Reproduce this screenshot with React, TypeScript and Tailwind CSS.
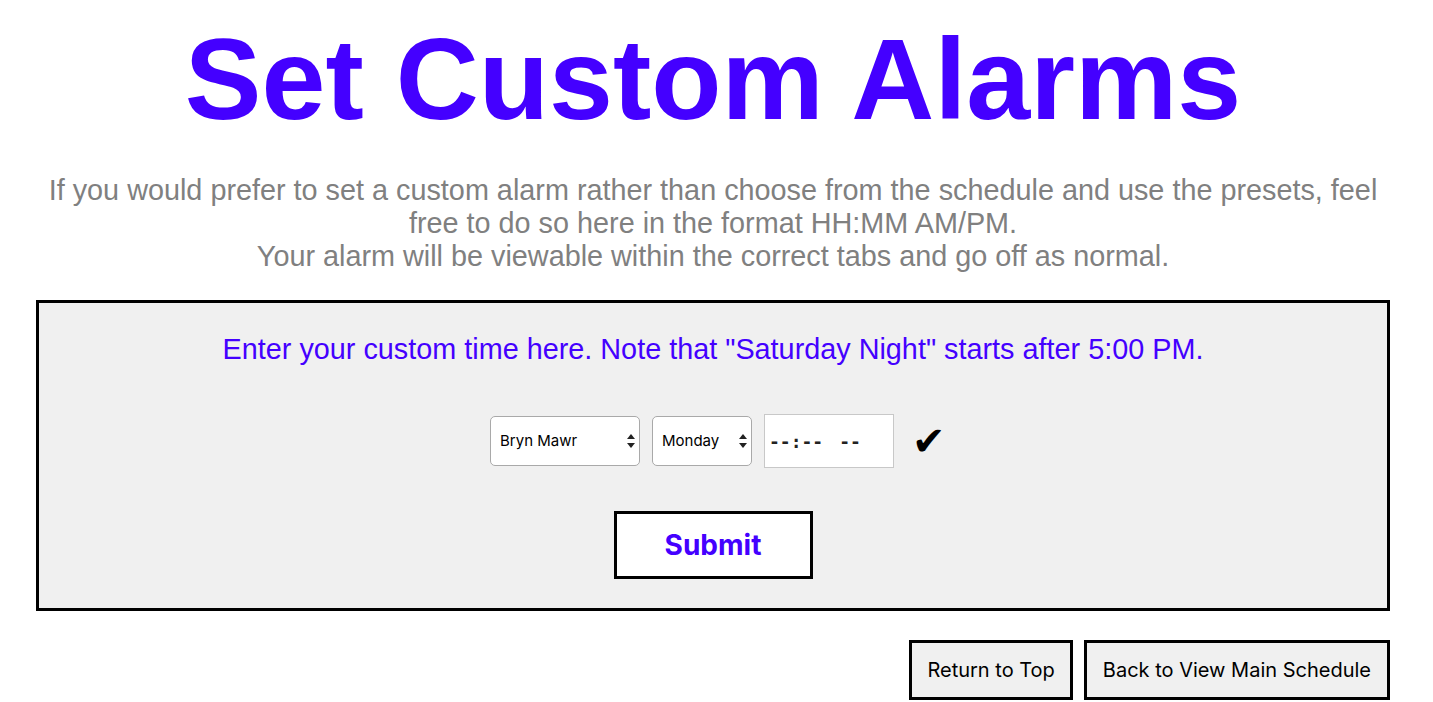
import React, { useState } from 'react';

const blue = 'text-[#4400ff]';

const CustomAlarms: React.FC = () => {
  const [college, setCollege] = useState('Bryn Mawr');
  const [day, setDay] = useState('Monday');

  return (
    <div className="min-h-screen bg-white pl-[36px] pr-[43px] font-['Liberation_Sans',Arial,sans-serif]">
      <h1 className={`pt-[14px] text-center text-[115px] font-bold leading-[130px] ${blue}`}>Set Custom Alarms</h1>

      <p className="mt-[30px] text-center text-[28.8px] leading-[33px] text-[#808080]">
        If you would prefer to set a custom alarm rather than choose from the schedule and use the presets, feel free to do so here in the format HH:MM AM/PM.
        <br />
        Your alarm will be viewable within the correct tabs and go off as normal.
      </p>

      <div className="mt-[27px] border-[3px] border-black bg-[#f0f0f0] pt-[29px] pb-[29px]">
        <p className={`text-center text-[28.8px] leading-[34px] ${blue}`}>
          Enter your custom time here. Note that "Saturday Night" starts after 5:00 PM.
        </p>

        <div className="mt-[48px] flex items-center justify-center gap-[12px] pl-[10px]">
          <div className="relative">
            <select
              value={college}
              onChange={(e) => setCollege(e.target.value)}
              className="h-[50px] w-[150px] appearance-none rounded-[5px] border border-[#a9a9a9] bg-white pl-[9px] text-[15px] text-black font-['Inter',sans-serif]"
            >
              <option>Bryn Mawr</option>
              <option>Haverford</option>
            </select>
            <Arrows />
          </div>
          <div className="relative">
            <select
              value={day}
              onChange={(e) => setDay(e.target.value)}
              className="h-[50px] w-[100px] appearance-none rounded-[5px] border border-[#a9a9a9] bg-white pl-[9px] text-[15px] text-black font-['Inter',sans-serif]"
            >
              <option>Monday</option>
              <option>Tuesday</option>
              <option>Wednesday</option>
              <option>Thursday</option>
              <option>Friday</option>
              <option>Saturday</option>
              <option>Sunday</option>
            </select>
            <Arrows />
          </div>
          <div className="flex h-[54px] w-[130px] items-center border border-[#c8c8c8] bg-white pl-[4px] font-['DejaVu_Sans_Mono',monospace] text-[18px] font-bold text-[#222]">
            <span>--:--</span>
            <span className="ml-[16px]">--</span>
          </div>
          <span className="ml-[6px] text-[40px] leading-none text-black">✔</span>
        </div>

        <div className="mt-[43px] flex justify-center">
          <button className={`h-[68px] w-[199px] border-[3px] border-black bg-white font-['Inter',sans-serif] text-[28px] font-bold ${blue}`}>
            Submit
          </button>
        </div>
      </div>

      <div className="mt-[29px] flex justify-end gap-[11px]">
        <button className="h-[60px] border-[3px] border-black bg-[#f0f0f0] px-[15px] font-['Inter',sans-serif] text-[20px] text-black">
          Return to Top
        </button>
        <button className="h-[60px] border-[3px] border-black bg-[#f0f0f0] px-[16px] font-['Inter',sans-serif] text-[20px] text-black">
          Back to View Main Schedule
        </button>
      </div>
    </div>
  );
};

const Arrows: React.FC = () => (
  <svg className="pointer-events-none absolute right-[5px] top-1/2 -translate-y-1/2" width="8" height="14" viewBox="0 0 8 14">
    <path d="M4 0 L8 5 L0 5 Z" fill="#222" />
    <path d="M0 9 L8 9 L4 14 Z" fill="#222" />
  </svg>
);

export default CustomAlarms;
